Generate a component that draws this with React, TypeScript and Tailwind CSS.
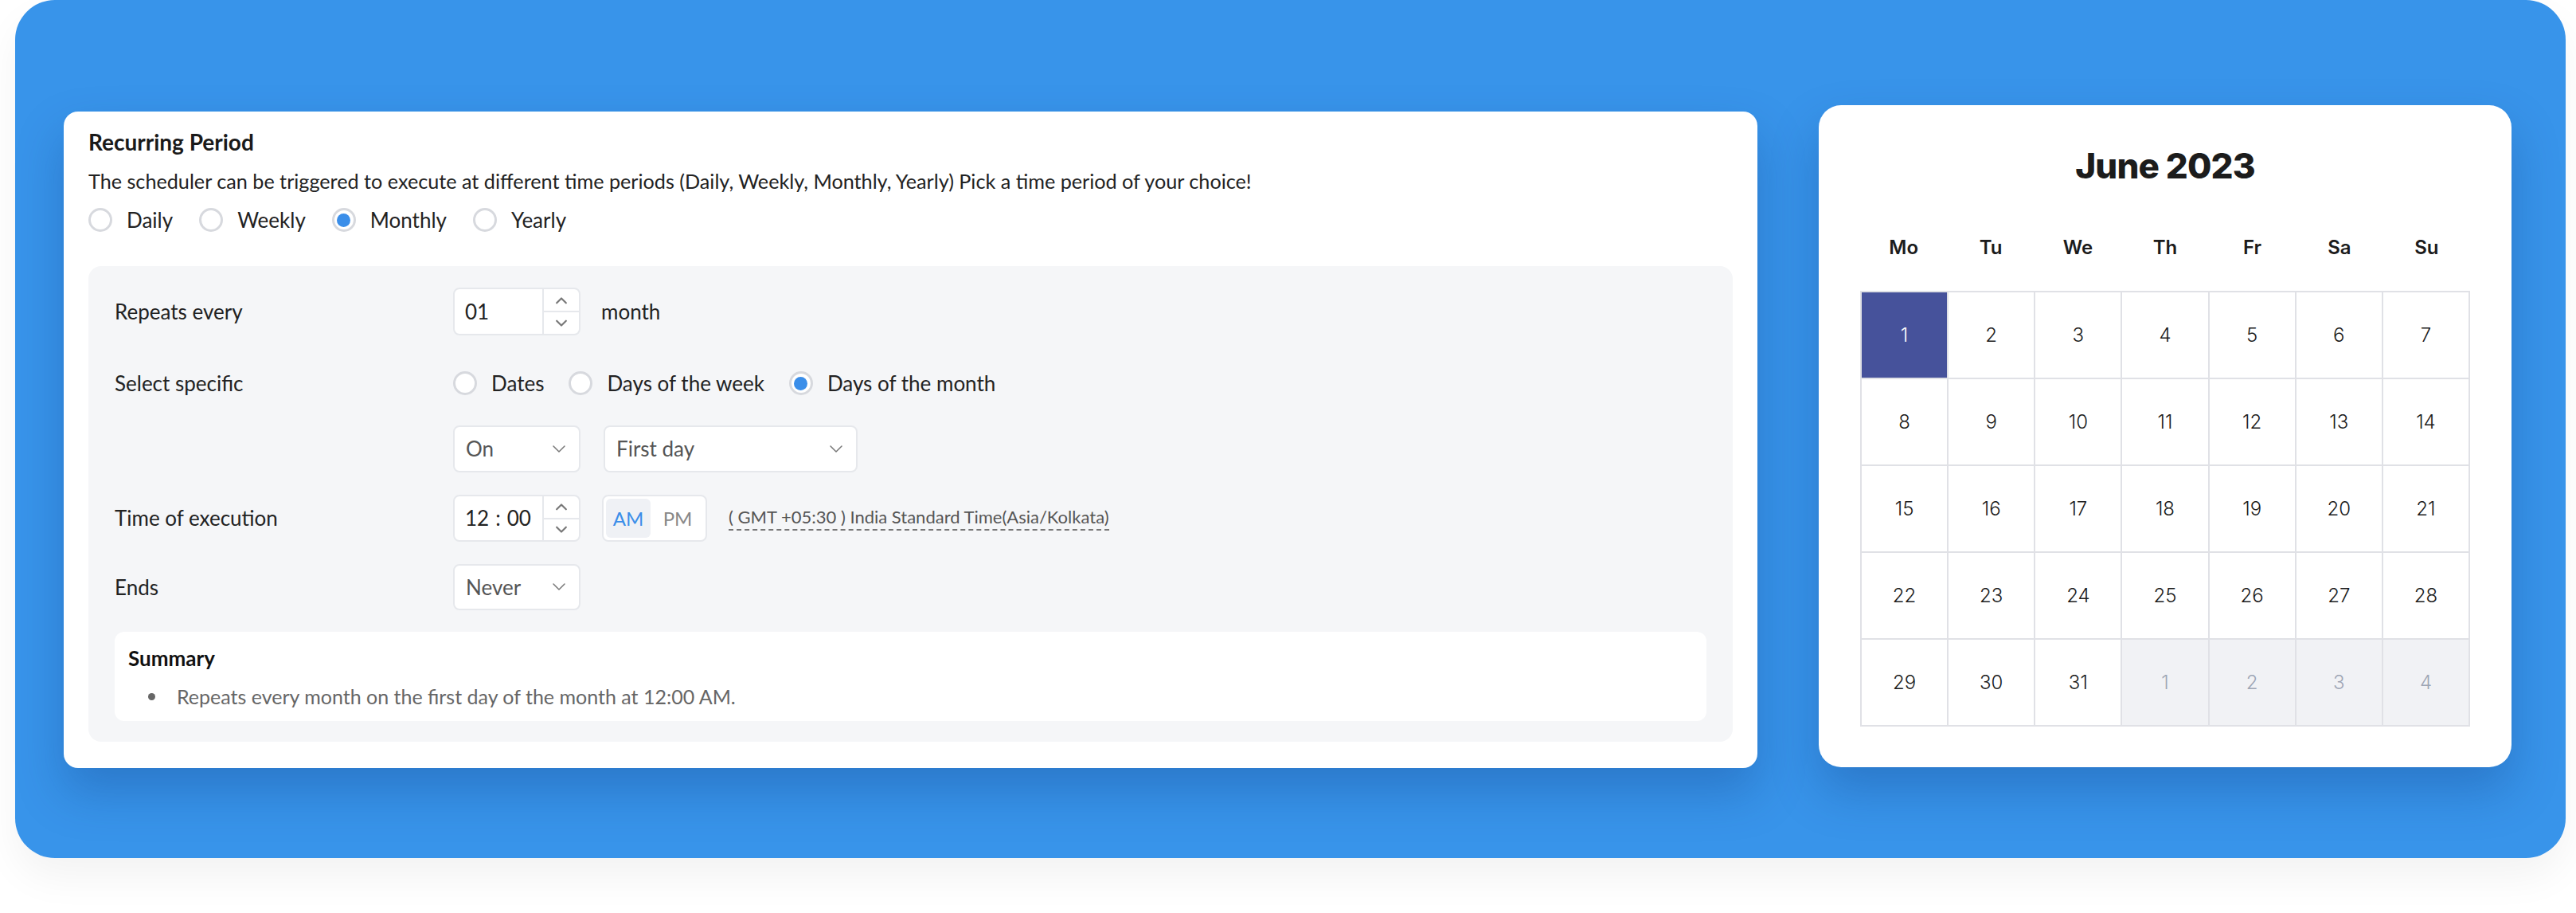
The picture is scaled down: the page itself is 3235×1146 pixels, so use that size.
import React from 'react';

const LATO = { fontFamily: 'Lato, "Open Sans", sans-serif' };

const Chevron: React.FC<{ up?: boolean; className?: string; width?: number }> = ({ up = false, className = '', width = 1.8 }) => (
  <svg viewBox="0 0 20 12" className={className} fill="none" stroke="currentColor" strokeWidth={width} strokeLinecap="round" strokeLinejoin="round">
    {up ? <path d="M3 10l7-7 7 7" /> : <path d="M3 2l7 7 7-7" />}
  </svg>
);

const Radio: React.FC<{ label: string; checked?: boolean }> = ({ label, checked = false }) => (
  <label className="flex items-center gap-[18px] text-[26px] text-[#222]">
    <span className="flex h-[30px] w-[30px] items-center justify-center rounded-full border-[3px] border-[#d7d9de] bg-white">
      {checked && <span className="h-[17px] w-[17px] rounded-full bg-[#3a8ee9]" />}
    </span>
    {label}
  </label>
);

const Spinner = () => (
  <div className="flex w-[46px] flex-col border-l-2 border-[#e6e8ec]">
    <div className="flex flex-1 items-center justify-center border-b-2 border-[#e6e8ec] text-[#777]">
      <Chevron up className="h-[10px] w-[18px]" width={2.6} />
    </div>
    <div className="flex flex-1 items-center justify-center text-[#777]">
      <Chevron className="h-[10px] w-[18px]" width={2.6} />
    </div>
  </div>
);

const Select: React.FC<{ value: string; w: string }> = ({ value, w }) => (
  <div className={`flex h-full items-center justify-between rounded-[8px] border-2 border-[#e6e8ec] bg-white pl-[14px] pr-[14px] text-[26px] text-[#555] ${w}`}>
    <span>{value}</span>
    <Chevron className="h-[12px] w-[22px] text-[#777]" width={1.5} />
  </div>
);

const Row: React.FC<{ label?: string; h: string; children: React.ReactNode }> = ({ label = '', h, children }) => (
  <div className={`flex items-center ${h}`}>
    <div className="w-[425px] shrink-0 text-[26px] text-[#222]">{label}</div>
    <div className="flex h-full items-center">{children}</div>
  </div>
);

const RecurringCard = () => (
  <div style={LATO} className="mt-[8px] flex w-[2127px] flex-col rounded-[18px] bg-white px-[31px] pb-[33px] pt-[20px] shadow-[0_30px_60px_rgba(10,50,120,0.28)]">
    <h2 className="text-[28px] font-bold leading-[36px] text-[#1a1a1a]">Recurring Period</h2>
    <p className="mt-[13px] text-[25.2px] leading-[36px] text-[#222]">
      The scheduler can be triggered to execute at different time periods (Daily, Weekly, Monthly, Yearly) Pick a time period of your choice!
    </p>
    <div className="mt-[13px] flex h-[36px] items-center gap-[33px]">
      <Radio label="Daily" />
      <Radio label="Weekly" />
      <Radio label="Monthly" checked />
      <Radio label="Yearly" />
    </div>

    <div className="mt-[40px] flex flex-col rounded-[16px] bg-[#f5f6f8] px-[33px] pb-[26px] pt-[27px]">
      <Row label="Repeats every" h="h-[60px]">
        <div className="flex h-full w-[160px] rounded-[8px] border-2 border-[#e6e8ec] bg-white">
          <div className="flex flex-1 items-center pl-[13px] text-[26px] text-[#222]">01</div>
          <Spinner />
        </div>
        <span className="ml-[26px] text-[26px] text-[#222]">month</span>
      </Row>

      <div className="mt-[30px]">
        <Row label="Select specific" h="h-[60px]">
          <div className="flex items-center gap-[31px]">
            <Radio label="Dates" />
            <Radio label="Days of the week" />
            <Radio label="Days of the month" checked />
          </div>
        </Row>
      </div>

      <div className="mt-[23px]">
        <Row h="h-[59px]">
          <Select value="On" w="w-[160px]" />
          <div className="ml-[29px] h-full">
            <Select value="First day" w="w-[319px]" />
          </div>
        </Row>
      </div>

      <div className="mt-[28px]">
        <Row label="Time of execution" h="h-[59px]">
          <div className="flex h-full w-[160px] rounded-[8px] border-2 border-[#e6e8ec] bg-white">
            <div className="flex flex-1 items-center gap-[8px] pl-[13px] text-[26px] text-[#222]">
              <span>12</span>
              <span>:</span>
              <span>00</span>
            </div>
            <Spinner />
          </div>
          <div className="ml-[27px] flex h-full w-[132px] items-center gap-[2px] rounded-[8px] border-2 border-[#e6e8ec] bg-white p-[3px]">
            <div className="flex h-full w-[56px] items-center justify-center rounded-[6px] bg-[#eff1f5] text-[24px] text-[#3a8ee9]">AM</div>
            <div className="flex h-full flex-1 items-center justify-center text-[24px] text-[#888]">PM</div>
          </div>
          <span className="ml-[27px] border-b-2 border-dashed border-[#777] pb-[1px] text-[22px] leading-[28px] text-[#555]">
            ( GMT +05:30 ) India Standard Time(Asia/Kolkata)
          </span>
        </Row>
      </div>

      <div className="mt-[28px]">
        <Row label="Ends" h="h-[58px]">
          <Select value="Never" w="w-[160px]" />
        </Row>
      </div>

      <div className="mt-[27px] flex h-[112px] flex-col rounded-[12px] bg-white px-[17px] pt-[18px]">
        <div className="text-[26px] font-bold leading-[30px] text-[#111]">Summary</div>
        <div className="mt-[18px] flex items-center text-[25px] leading-[30px] text-[#666]">
          <span className="ml-[25px] mr-[27px] h-[9px] w-[9px] rounded-full bg-[#666]" />
          Repeats every month on the first day of the month at 12:00 AM.
        </div>
      </div>
    </div>
  </div>
);

const DAYS = ['Mo', 'Tu', 'We', 'Th', 'Fr', 'Sa', 'Su'];

const CalendarCard = () => {
  const cells: { n: number; muted: boolean }[] = [];
  for (let i = 1; i <= 31; i++) cells.push({ n: i, muted: false });
  for (let i = 1; i <= 4; i++) cells.push({ n: i, muted: true });

  return (
    <div style={{ fontFamily: 'Inter, "Liberation Sans", sans-serif' }} className="flex w-[870px] flex-col items-center rounded-[28px] bg-white px-[51px] pb-[51px] pt-[48px] shadow-[0_30px_60px_rgba(10,50,120,0.28)]">
      <h2 className="text-[44px] font-extrabold leading-[56px] tracking-[-0.02em] text-[#1c1c1c]">June 2023</h2>
      <div className="mt-[59px] grid w-[766px] grid-cols-7">
        {DAYS.map(d => (
          <div key={d} className="text-center text-[24px] font-semibold leading-[32px] text-[#1c1c1c]">{d}</div>
        ))}
      </div>
      <div className="mt-[38px] grid w-[766px] grid-cols-7 gap-[2px] border-2 border-[#e0e1e6] bg-[#e0e1e6]">
        {cells.map((c, i) => (
          <div
            key={i}
            className={`flex h-[107px] items-center justify-center text-[24px] font-light ${
              i === 0 ? 'bg-[#46529b] text-white' : c.muted ? 'bg-[#f1f2f5] text-[#9ea6b5]' : 'bg-white text-[#1c1c1c]'
            }`}
          >
            {c.n}
          </div>
        ))}
      </div>
    </div>
  );
};

export default function App() {
  return (
    <div className="h-[1146px] w-[3235px] overflow-hidden bg-white">
      <div className="ml-[19px] flex h-[1077px] w-[3203px] items-start gap-[77px] rounded-[50px] bg-[#3894ea] pl-[61px] pt-[132px] shadow-[0_24px_50px_rgba(0,0,0,0.05)]">
        <RecurringCard />
        <CalendarCard />
      </div>
    </div>
  );
}
